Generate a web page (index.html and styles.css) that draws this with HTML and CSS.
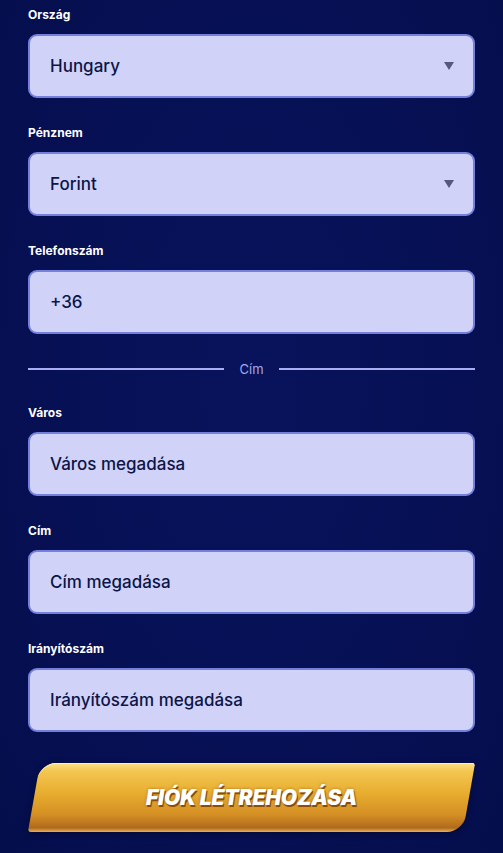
FILE: index.html
```html
<!DOCTYPE html>
<html>
<head>
  <title>Regisztráció</title>
  <link rel="stylesheet" href="styles.css">
</head>
<body>

  <form class="signup">
    <div class="field">
      <label>Ország</label>
      <div class="select-wrap">
        <select class="control">
          <option>Hungary</option>
        </select>
        <svg class="caret" width="10" height="8" viewBox="0 0 10 8"><path d="M0 0h10L5 8z" fill="#55597c"/></svg>
      </div>
    </div>

    <div class="field">
      <label>Pénznem</label>
      <div class="select-wrap">
        <select class="control">
          <option>Forint</option>
        </select>
        <svg class="caret" width="10" height="8" viewBox="0 0 10 8"><path d="M0 0h10L5 8z" fill="#55597c"/></svg>
      </div>
    </div>

    <div class="field">
      <label>Telefonszám</label>
      <input class="control" type="text" value="+36">
    </div>

    <!-- Address section -->
    <div class="divider"><span>Cím</span></div>

    <div class="field">
      <label>Város</label>
      <input class="control" type="text" placeholder="Város megadása">
    </div>

    <div class="field">
      <label>Cím</label>
      <input class="control" type="text" placeholder="Cím megadása">
    </div>

    <div class="field">
      <label>Irányítószám</label>
      <input class="control" type="text" placeholder="Irányítószám megadása">
    </div>

    <button type="button" class="submit-btn"><span>Fiók létrehozása</span></button>
  </form>

</body>
</html>
```

FILE: styles.css
```css
body {
  margin: 0;
  background: radial-gradient(ellipse at 50% 45%, #08135c 0%, #061054 55%, #050e4c 100%);
  font-family: Inter, "Noto Sans", sans-serif;
  min-height: 853px;
}
.signup {
  padding: 7px 28px 0;
  display: flex;
  flex-direction: column;
}
.field {
  display: flex;
  flex-direction: column;
  margin-bottom: 27px;
}
.field label {
  color: #ffffff;
  font-size: 12px;
  font-weight: 700;
  line-height: 16px;
  margin-bottom: 11px;
}
.control {
  appearance: none;
  -webkit-appearance: none;
  box-sizing: border-box;
  width: 100%;
  height: 64px;
  padding: 0 20px;
  background: #d0d3f7;
  border: 2px solid #7480dc;
  border-radius: 9px;
  font-family: Inter, "Noto Sans", sans-serif;
  font-size: 17px;
  font-weight: 500;
  color: #0d1448;
  outline: none;
}
.control::placeholder {
  color: #0d1448;
  opacity: 1;
}
.select-wrap {
  position: relative;
}
.caret {
  position: absolute;
  right: 21px;
  top: 28px;
  pointer-events: none;
}
.divider {
  display: flex;
  align-items: center;
  gap: 15px;
  height: 18px;
  margin: -1px 0 27px;
  color: #a4a9ea;
  font-size: 13px;
}
.divider::before,
.divider::after {
  content: "";
  flex: 1;
  height: 2px;
  background: #a9aef2;
}
.submit-btn {
  margin: 4px 6px 0;
  height: 69px;
  border: none;
  border-radius: 16px 3px 16px 3px;
  transform: skewX(-10deg);
  background: linear-gradient(180deg, #fbe08a 0%, #f3c650 12%, #e7ac2f 45%, #d48f24 75%, #b06a1c 94%, #e9b15a 100%);
  box-shadow: inset 0 1px 0 #fff2b8, 0 2px 6px rgba(0,0,0,0.35);
  cursor: pointer;
}
.submit-btn span {
  display: inline-block;
  transform: skewX(10deg);
  font-family: Inter, "Noto Sans", sans-serif;
  font-size: 21px;
  font-weight: 900;
  font-style: italic;
  text-transform: uppercase;
  letter-spacing: -0.2px;
  color: #ffffff;
  text-shadow: 1px 2px 0 #8a4d10, 0 0 3px rgba(120,60,0,0.5);
}
```
